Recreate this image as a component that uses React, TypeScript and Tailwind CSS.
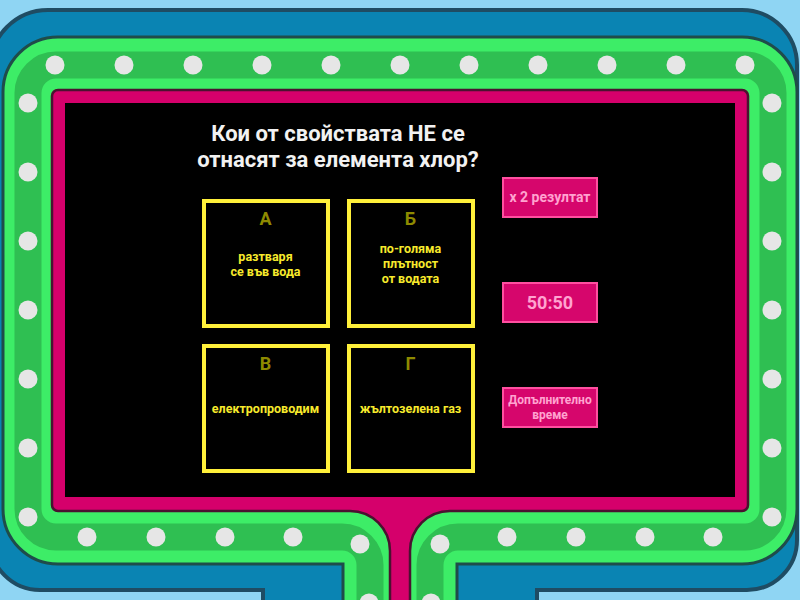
import React from 'react';

const cards = [
  { letter: 'А', lines: ['разтваря', 'се във вода'] },
  { letter: 'Б', lines: ['по-голяма', 'плътност', 'от водата'] },
  { letter: 'В', lines: ['електропроводим'] },
  { letter: 'Г', lines: ['жълтозелена газ'] },
];

const topDots = [55, 124, 193, 262, 331, 400, 469, 538, 607, 676, 745];
const sideDots = [103, 172, 241, 310, 379, 448, 517];
const bottomDots: [number, number][] = [
  [87, 537],
  [156, 537],
  [225, 537],
  [293, 537],
  [360, 544],
  [369, 603],
  [431, 603],
  [440, 544],
  [507, 537],
  [576, 537],
  [645, 537],
  [713, 537],
];

function Frame() {
  return (
    <svg
      className="absolute inset-0"
      width="800"
      height="600"
      viewBox="0 0 800 600"
    >
      {/* outer blue band */}
      <path
        d="M -10,68 A58,58 0 0 1 48,10 L 742,10 A55,55 0 0 1 797,65 L 797,540 A50,50 0 0 1 747,590 L 537,590 L 537,620 L 263,620 L 263,590 L 40,590 A50,50 0 0 1 -10,540 Z"
        fill="#0a84b3"
        stroke="#1f4c63"
        strokeWidth="4"
      />
      {/* green band */}
      <path
        d="M 3,92 A55,55 0 0 1 58,37 L 742,37 A55,55 0 0 1 797,92 L 797,509 A55,55 0 0 1 742,564 L 457,564 L 457,620 L 343,620 L 343,564 L 58,564 A55,55 0 0 1 3,509 Z"
        fill="#3ded67"
        stroke="#1f4c4a"
        strokeWidth="3"
      />
      <path
        d="M 28,93 A28,28 0 0 1 56,65 L 745,65 A28,28 0 0 1 773,93 L 773,509 A28,28 0 0 1 745,537 L 458,537 A28,28 0 0 0 430,565 L 430,620 L 370,620 L 370,565 A28,28 0 0 0 342,537 L 56,537 A28,28 0 0 1 28,509 Z"
        fill="none"
        stroke="#2fbf52"
        strokeWidth="27"
      />
      {/* pink screen surround */}
      <path
        d="M 52,96 A6,6 0 0 1 58,90 L 742,90 A6,6 0 0 1 748,96 L 748,505 A6,6 0 0 1 742,511 L 450,511 A40,40 0 0 0 410,551 L 410,620 L 390,620 L 390,551 A40,40 0 0 0 350,511 L 58,511 A6,6 0 0 1 52,505 Z"
        fill="#d5006b"
        stroke="#4a1230"
        strokeWidth="2.5"
      />
      <g fill="#e6e6e6">
        {topDots.map((x) => (
          <circle key={'t' + x} cx={x} cy={65} r={9.5} />
        ))}
        {sideDots.map((y) => (
          <circle key={'l' + y} cx={28} cy={y} r={9.5} />
        ))}
        {sideDots.map((y) => (
          <circle key={'r' + y} cx={772} cy={y} r={9.5} />
        ))}
        {bottomDots.map(([x, y]) => (
          <circle key={'b' + x} cx={x} cy={y} r={9.5} />
        ))}
      </g>
    </svg>
  );
}

function Card({ letter, lines }: { letter: string; lines: string[] }) {
  return (
    <div className="grid h-[129px] w-[128px] border-4 border-[#fff03a]">
      <div className="[grid-area:1/1] mt-[5px] self-start justify-self-center text-[18px] font-bold leading-[21px] text-[#8e8a00]">
        {letter}
      </div>
      <div className="[grid-area:1/1] self-center text-center text-[12.5px] font-bold leading-[15px] text-[#f7ea2c]">
        {lines.map((l) => (
          <div key={l}>{l}</div>
        ))}
      </div>
    </div>
  );
}

function PowerButton({ children, size }: { children: React.ReactNode; size: string }) {
  return (
    <div
      className={
        'flex h-[41px] w-[96px] items-center justify-center border-2 border-[#ff4fa0] bg-[#d6066c] text-center font-bold text-[#ffa3d0] ' +
        size
      }
    >
      {children}
    </div>
  );
}

export default function App() {
  return (
    <div
      className="relative h-[600px] w-[800px] overflow-hidden bg-[#8fd5f3]"
      style={{ fontFamily: 'Roboto, "Noto Sans", sans-serif' }}
    >
      <Frame />
      <div className="relative pl-[65px] pt-[103px]">
        <div className="flex h-[394px] w-[670px] bg-black pl-[113px]">
          <div className="flex w-[320px] flex-col items-center pt-[18px]">
            <h1 className="text-center text-[22px] font-bold leading-[26px] text-[#f2f2f2]">
              <div>Кои от свойствата НЕ се</div>
              <div>отнасят за елемента хлор?</div>
            </h1>
            <div className="mt-[26px] grid grid-cols-[128px_128px] gap-x-[17px] gap-y-[16px]">
              {cards.map((c) => (
                <Card key={c.letter} letter={c.letter} lines={c.lines} />
              ))}
            </div>
          </div>
          <div className="ml-[4px] flex w-[96px] flex-col gap-[64px] pt-[74px]">
            <PowerButton size="text-[14px] leading-[17px]">х 2 резултат</PowerButton>
            <PowerButton size="text-[18px] leading-[22px]">50:50</PowerButton>
            <PowerButton size="text-[12px] leading-[15px]">
              Допълнително
              <br />
              време
            </PowerButton>
          </div>
        </div>
      </div>
    </div>
  );
}
